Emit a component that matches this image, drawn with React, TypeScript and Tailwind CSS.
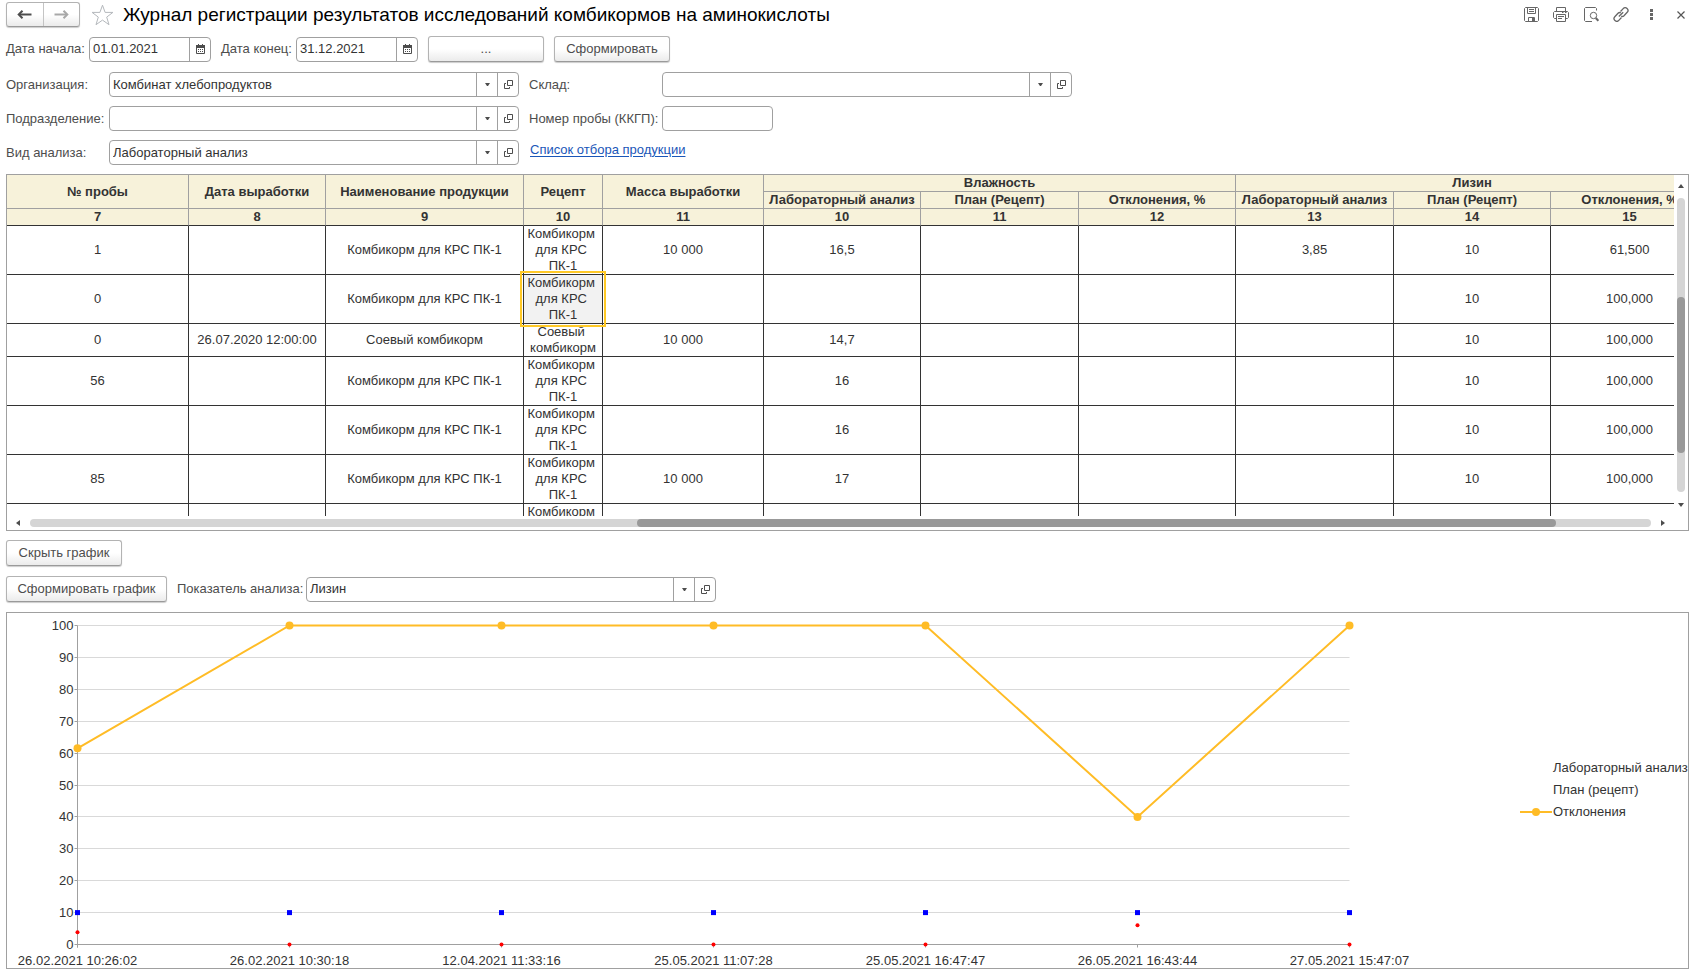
import { useState } from 'react';
import type { ReactNode } from 'react';
import clsx from 'clsx';

const NBSP = '\u00a0';
const KRS = 'Комбикорм для КРС ПК-1';
const KRS_RECIPE = `Комбикорм${NBSP}\nдля КРС${NBSP}\nПК-1`;

// One entry per column, in table order
const rows: string[][] = [
  ['1', '', KRS, KRS_RECIPE, '10 000', '16,5', '', '', '3,85', '10', '61,500'],
  ['0', '', KRS, KRS_RECIPE, '', '', '', '', '', '10', '100,000'],
  ['0', '26.07.2020 12:00:00', 'Соевый комбикорм', `Соевый${NBSP}\nкомбикорм`, '10 000', '14,7', '', '', '', '10', '100,000'],
  ['56', '', KRS, KRS_RECIPE, '', '16', '', '', '', '10', '100,000'],
  ['', '', KRS, KRS_RECIPE, '', '16', '', '', '', '10', '100,000'],
  ['85', '', KRS, KRS_RECIPE, '10 000', '17', '', '', '', '10', '100,000'],
  ['', '', '', KRS_RECIPE, '', '', '', '', '', '', ''],
];

const columnNumbers = ['7', '8', '9', '10', '11', '10', '11', '12', '13', '14', '15'];

const chartPoints = [
  { label: '26.02.2021 10:26:02', lab: 3.85, plan: 10, deviation: 61.5 },
  { label: '26.02.2021 10:30:18', lab: 0, plan: 10, deviation: 100 },
  { label: '12.04.2021 11:33:16', lab: 0, plan: 10, deviation: 100 },
  { label: '25.05.2021 11:07:28', lab: 0, plan: 10, deviation: 100 },
  { label: '25.05.2021 16:47:47', lab: 0, plan: 10, deviation: 100 },
  { label: '26.05.2021 16:43:44', lab: 6, plan: 10, deviation: 40 },
  { label: '27.05.2021 15:47:07', lab: 0, plan: 10, deviation: 100 },
];

function PushButton({ children, className }: { children: ReactNode; className?: string }) {
  return (
    <button
      type="button"
      className={clsx(
        'h-[26px] rounded-[3px] border border-[#b3b3b3] border-b-[#9a9a9a] bg-linear-to-b from-white from-50% to-[#ebebeb] px-2 text-center whitespace-nowrap text-[#4d4d4d] shadow-[0_1px_1px_rgba(0,0,0,0.2)]',
        className,
      )}
    >
      {children}
    </button>
  );
}

function OpenIcon() {
  return (
    <svg width="9" height="9" viewBox="0 0 9 9" fill="none" stroke="#4d4d4d">
      <path d="M3.5 0.5h5v5h-5z" />
      <path d="M2 3.5H0.5v5h5V7" />
    </svg>
  );
}

function CalendarIcon() {
  return (
    <svg width="9" height="10" viewBox="0 0 9 10" fill="none">
      <path d="M0.5 1.5h8v8h-8z" stroke="#4d4d4d" />
      <path d="M0 1h9v3H0zM2 0h1v1H2zM6 0h1v1H6z" fill="#4d4d4d" />
      <path d="M2 5h1v1H2zM4 5h1v1H4zM6 5h1v1H6zM2 7h1v1H2zM4 7h1v1H4zM6 7h1v1H6z" fill="#4d4d4d" />
    </svg>
  );
}

const boxClass = 'flex h-[25px] overflow-hidden rounded-[4px] border border-[#a0a0a0] bg-white';
const boxButton = 'flex shrink-0 items-center justify-center border-l border-[#a0a0a0]';
const boxInput = 'min-w-0 flex-1 px-[3px] text-[#333] outline-none';

function DateField({ id, initial }: { id: string; initial: string }) {
  const [value, setValue] = useState(initial);
  return (
    <div className={clsx(boxClass, 'w-[122px]')}>
      <input id={id} className={boxInput} value={value} onChange={(e) => setValue(e.target.value)} />
      <button type="button" aria-label="Выбрать дату" className={clsx(boxButton, 'w-[21px]')}>
        <CalendarIcon />
      </button>
    </div>
  );
}

function ComboField({ id, initial = '' }: { id: string; initial?: string }) {
  const [value, setValue] = useState(initial);
  return (
    <div className={clsx(boxClass, 'w-[410px]')}>
      <input id={id} className={boxInput} value={value} onChange={(e) => setValue(e.target.value)} />
      <button type="button" aria-label="Выбрать из списка" className={clsx(boxButton, 'w-[21px]')}>
        <svg width="5" height="3" viewBox="0 0 5 3">
          <path d="M0 0h5L3 3H2z" fill="#4d4d4d" />
        </svg>
      </button>
      <button type="button" aria-label="Открыть" className={clsx(boxButton, 'w-[21px]')}>
        <OpenIcon />
      </button>
    </div>
  );
}

function IconButton({ label, className, children }: { label: string; className?: string; children: ReactNode }) {
  return (
    <button type="button" aria-label={label} className={clsx('flex h-6 items-center justify-center', className ?? 'w-[30px]')}>
      {children}
    </button>
  );
}

function TitleBar() {
  return (
    <header className="flex h-[25px] items-center">
      <div className="flex h-[25px] w-[74px] rounded-[3px] border border-[#b3b3b3] border-b-[#9a9a9a] bg-linear-to-b from-white from-50% to-[#ebebeb] shadow-[0_1px_1px_rgba(0,0,0,0.2)]">
        <button type="button" aria-label="Назад" className="flex flex-1 items-center justify-center">
          <svg width="15" height="9" viewBox="0 0 15 9" fill="none" stroke="#4d4d4d" strokeWidth="2">
            <path d="M14.5 4.5H2" />
            <path d="M5.5 0.7L1.7 4.5l3.8 3.8" />
          </svg>
        </button>
        <button type="button" aria-label="Вперед" className="flex flex-1 items-center justify-center border-l border-[#c4c4c4]">
          <svg width="15" height="9" viewBox="0 0 15 9" fill="none" stroke="#a8a8a8" strokeWidth="2">
            <path d="M0.5 4.5H13" />
            <path d="M9.5 0.7l3.8 3.8-3.8 3.8" />
          </svg>
        </button>
      </div>
      <button type="button" aria-label="В избранное" className="ml-[11px]">
        <svg width="23" height="22" viewBox="0 0 23 22" fill="none" stroke="#b4b8bc">
          <path d="M11.5 1.2l2.6 7.2h7.8l-6.2 4.7 2.3 7.6-6.5-4.6L5 20.7l2.3-7.6-6.2-4.7h7.8z" />
        </svg>
      </button>
      <h1 className="ml-[9px] whitespace-nowrap text-[19px] leading-6 text-black">
        Журнал регистрации результатов исследований комбикормов на аминокислоты
      </h1>
      <div className="ml-auto flex">
        <IconButton label="Сохранить">
          <svg width="15" height="15" viewBox="0 0 15 15" fill="none" stroke="#666">
            <path d="M1.5 0.5h12l1 1v12l-1 1h-12l-1-1v-12z" />
            <path d="M3.5 0.5v6h8v-6M5 2.5h5M5 4.5h5M4.5 14.5v-4h6v4" />
            <path d="M8 11h2v3H8z" fill="#666" stroke="none" />
          </svg>
        </IconButton>
        <IconButton label="Печать">
          <svg width="16" height="15" viewBox="0 0 16 15" fill="none" stroke="#666">
            <path d="M3.5 4V0.5h9V4" />
            <path d="M3.5 11.5h-2l-1-1v-5l1-1h13l1 1v5l-1 1h-2" />
            <path d="M3.5 7.5h9v7h-9zM5 9.5h6M5 11.5h4M9 5.5h1.5M12 5.5h1.5" />
          </svg>
        </IconButton>
        <IconButton label="Предварительный просмотр">
          <svg width="15" height="15" viewBox="0 0 15 15" fill="none" stroke="#666">
            <path d="M12.5 3.5v-2l-1-1h-10l-1 1v12l1 1H8" />
            <circle cx="9.5" cy="8.5" r="3.2" />
            <path d="M11.8 11l2.5 2.8" strokeWidth="2" />
          </svg>
        </IconButton>
        <IconButton label="Получить ссылку">
          <svg width="16" height="15" viewBox="0 0 16 15" fill="none" stroke="#666" strokeWidth="1.3">
            <path d="M7.5 4.5l2.7-2.9a2.7 2.7 0 0 1 4 3.7L11 8.7a2.5 2.5 0 0 1-2.8 0.5" />
            <path d="M8.500 10.500l-2.700 2.900a2.700 2.700 0 0 1-4-3.700L5 6.300a2.500 2.500 0 0 1 2.800-0.500" />
            <path d="M5.800 9.500l4.400-4.200" />
          </svg>
        </IconButton>
        <IconButton label="Еще">
          <svg width="3" height="11" viewBox="0 0 3 11" fill="#666">
            <path d="M0 0h3v3H0zM0 4h3v3H0zM0 8h3v3H0z" />
          </svg>
        </IconButton>
        <IconButton label="Закрыть" className="ml-[7px] w-4">
          <svg width="8" height="8" viewBox="0 0 8 8" stroke="#555" strokeWidth="1.2">
            <path d="M0.5 0.5l7 7M7.5 0.5l-7 7" />
          </svg>
        </IconButton>
      </div>
    </header>
  );
}

const headCell = 'border-r border-b border-[#a0a0a0] p-0 text-center align-middle font-bold';

function ResultsTable() {
  return (
    <table className="w-[1702px] table-fixed border-separate border-spacing-0 leading-4 text-[#333]">
      <colgroup>
        <col className="w-[182px]" />
        <col className="w-[137px]" />
        <col className="w-[198px]" />
        <col className="w-[79px]" />
        <col className="w-[161px]" />
        <col className="w-[157px]" />
        <col className="w-[158px]" />
        <col className="w-[157px]" />
        <col className="w-[158px]" />
        <col className="w-[157px]" />
        <col className="w-[158px]" />
      </colgroup>
      <thead className="bg-[#f7f2da]">
        <tr>
          <th rowSpan={2} className={headCell}>№ пробы</th>
          <th rowSpan={2} className={headCell}>Дата выработки</th>
          <th rowSpan={2} className={headCell}>Наименование продукции</th>
          <th rowSpan={2} className={headCell}>Рецепт</th>
          <th rowSpan={2} className={headCell}>Масса выработки</th>
          <th colSpan={3} className={headCell}>Влажность</th>
          <th colSpan={3} className={headCell}>Лизин</th>
        </tr>
        <tr className="whitespace-nowrap">
          <th className={headCell}>Лабораторный анализ</th>
          <th className={headCell}>План (Рецепт)</th>
          <th className={headCell}>Отклонения, %</th>
          <th className={headCell}>Лабораторный анализ</th>
          <th className={headCell}>План (Рецепт)</th>
          <th className={headCell}>Отклонения, %</th>
        </tr>
        <tr>
          {columnNumbers.map((n, i) => (
            <th key={i} className="border-r border-b border-r-[#a0a0a0] border-b-[#333] p-0 text-center font-bold">
              {n}
            </th>
          ))}
        </tr>
      </thead>
      <tbody>
        {rows.map((row, r) => (
          <tr key={r}>
            {row.map((value, c) => {
              const selected = r === 1 && c === 3;
              return (
                <td
                  key={c}
                  className={clsx(
                    'border-r border-b border-[#333] p-0 text-center align-middle whitespace-pre-line',
                    selected && 'relative bg-[#f2f2f2]',
                  )}
                >
                  {value}
                  {selected && <span className="absolute -inset-1 border-2 border-[#ffc926]" />}
                </td>
              );
            })}
          </tr>
        ))}
      </tbody>
    </table>
  );
}

function VerticalScrollbar() {
  return (
    <div className="flex w-[14px] shrink-0 flex-col items-center py-[9px]">
      <svg width="6" height="4" viewBox="0 0 6 4" fill="#4d4d4d">
        <path d="M0 4h6L3 0z" />
      </svg>
      <div className="mt-[10px] mb-[11px] flex w-2 flex-1 flex-col rounded-full bg-[#d5d5d5]">
        <div className="mt-[99px] h-[156px] rounded-full bg-[#999]" />
      </div>
      <svg width="6" height="4" viewBox="0 0 6 4" fill="#4d4d4d">
        <path d="M0 0h6L3 4z" />
      </svg>
    </div>
  );
}

function HorizontalScrollbar() {
  return (
    <div className="flex h-[14px] items-center pr-[23px] pl-[9px]">
      <svg width="4" height="6" viewBox="0 0 4 6" fill="#4d4d4d">
        <path d="M4 0v6L0 3z" />
      </svg>
      <div className="mx-[10px] flex h-2 flex-1 rounded-full bg-[#d5d5d5]">
        <div className="grow-[607]" />
        <div className="grow-[919] rounded-full bg-[#999]" />
        <div className="grow-[95]" />
      </div>
      <svg width="4" height="6" viewBox="0 0 4 6" fill="#4d4d4d">
        <path d="M0 0v6l4-3z" />
      </svg>
    </div>
  );
}

const AXIS_X = 70.5;
const AXIS_Y = 331.5;
const STEP_X = 212;
const xAt = (i: number) => AXIS_X + i * STEP_X;
const yAt = (v: number) => AXIS_Y - v * 3.19;

function Chart() {
  const line = chartPoints.map((p, i) => `${xAt(i)},${yAt(p.deviation)}`).join(' ');
  return (
    <svg viewBox="0 0 1512 355" className="min-w-0 flex-1 text-[13px]" fill="#333">
      {Array.from({ length: 11 }, (_, i) => i * 10).map((v) => {
        const y = Math.floor(yAt(v)) + 0.5;
        return (
          <g key={v}>
            {v > 0 && <path d={`M${AXIS_X} ${y}H${xAt(6)}`} stroke="#d9d9d9" />}
            <path d={`M${AXIS_X - 3} ${y}h3`} stroke="#a0a0a0" />
            <text x={AXIS_X - 4} y={y + 4.5} textAnchor="end">{v}</text>
          </g>
        );
      })}
      <path d={`M${AXIS_X} ${yAt(100)}V${AXIS_Y + 3}M${AXIS_X} ${AXIS_Y}H${xAt(6)}`} stroke="#a0a0a0" fill="none" />
      {chartPoints.map((p, i) => (
        <g key={p.label}>
          <path d={`M${xAt(i)} ${AXIS_Y}v3`} stroke="#a0a0a0" />
          <text x={xAt(i)} y="352" textAnchor="middle">{p.label}</text>
          <circle cx={xAt(i)} cy={yAt(p.lab)} r="2" fill="#f00" />
          <rect x={xAt(i) - 2.5} y={yAt(p.plan) - 2.5} width="5" height="5" fill="#00f" />
        </g>
      ))}
      <polyline points={line} fill="none" stroke="#ffbc26" strokeWidth="2" />
      {chartPoints.map((p, i) => (
        <circle key={p.label} cx={xAt(i)} cy={yAt(p.deviation)} r="4" fill="#ffbc26" />
      ))}
    </svg>
  );
}

function Legend() {
  return (
    <ul className="mt-36 w-[169px] shrink-0 whitespace-nowrap text-[#333]">
      <li className="h-[22px] pl-[34px] leading-[22px]">Лабораторный анализ</li>
      <li className="h-[22px] pl-[34px] leading-[22px]">План (рецепт)</li>
      <li className="flex h-[22px] items-center leading-[22px]">
        <svg width="34" height="8" viewBox="0 0 34 8">
          <path d="M1 4h32" stroke="#ffbc26" strokeWidth="2" />
          <circle cx="17" cy="4" r="4" fill="#ffbc26" />
        </svg>
        Отклонения
      </li>
    </ul>
  );
}

export default function App() {
  const [sample, setSample] = useState('');

  return (
    <main className="bg-white pt-[2px] pr-[5px] pb-2 pl-[6px] font-['Liberation_Sans',Arial,sans-serif] text-[13px] text-[#4d4d4d]">
      <TitleBar />

      <div className="mt-[9px] flex items-center">
        <label htmlFor="date-from" className="w-[83px]">Дата начала:</label>
        <DateField id="date-from" initial="01.01.2021" />
        <label htmlFor="date-to" className="w-[85px] pl-[10px]">Дата конец:</label>
        <DateField id="date-to" initial="31.12.2021" />
        <PushButton className="ml-[10px] w-[116px]">...</PushButton>
        <PushButton className="ml-[10px] w-[116px]">Сформировать</PushButton>
      </div>

      <div className="mt-[10px] grid grid-cols-[103px_410px_143px_410px] items-center gap-y-[9px] whitespace-nowrap">
        <label htmlFor="org">Организация:</label>
        <ComboField id="org" initial="Комбинат хлебопродуктов" />
        <label htmlFor="stock" className="pl-[10px]">Склад:</label>
        <ComboField id="stock" />

        <label htmlFor="dept">Подразделение:</label>
        <ComboField id="dept" />
        <label htmlFor="sample" className="pl-[10px]">Номер пробы (ККГП):</label>
        <div className={clsx(boxClass, 'w-[111px]')}>
          <input id="sample" className={boxInput} value={sample} onChange={(e) => setSample(e.target.value)} />
        </div>

        <label htmlFor="kind">Вид анализа:</label>
        <ComboField id="kind" initial="Лабораторный анализ" />
        <a href="#selection" className="self-start pl-[11px] text-[#1a56b8] underline underline-offset-2">
          Список отбора продукции
        </a>
      </div>

      <section className="mt-[9px] border border-[#a0a0a0]">
        <div className="flex h-[341px]">
          <div className="min-w-0 flex-1 overflow-hidden">
            <ResultsTable />
          </div>
          <VerticalScrollbar />
        </div>
        <HorizontalScrollbar />
      </section>

      <PushButton className="mt-[9px] block w-[116px]">Скрыть график</PushButton>

      <div className="mt-[10px] flex items-center">
        <PushButton className="w-[161px]">Сформировать график</PushButton>
        <label htmlFor="metric" className="w-[139px] pl-[10px] whitespace-nowrap">Показатель анализа:</label>
        <ComboField id="metric" initial="Лизин" />
      </div>

      <section className="mt-[10px] flex border border-[#a0a0a0]">
        <Chart />
        <Legend />
      </section>
    </main>
  );
}
